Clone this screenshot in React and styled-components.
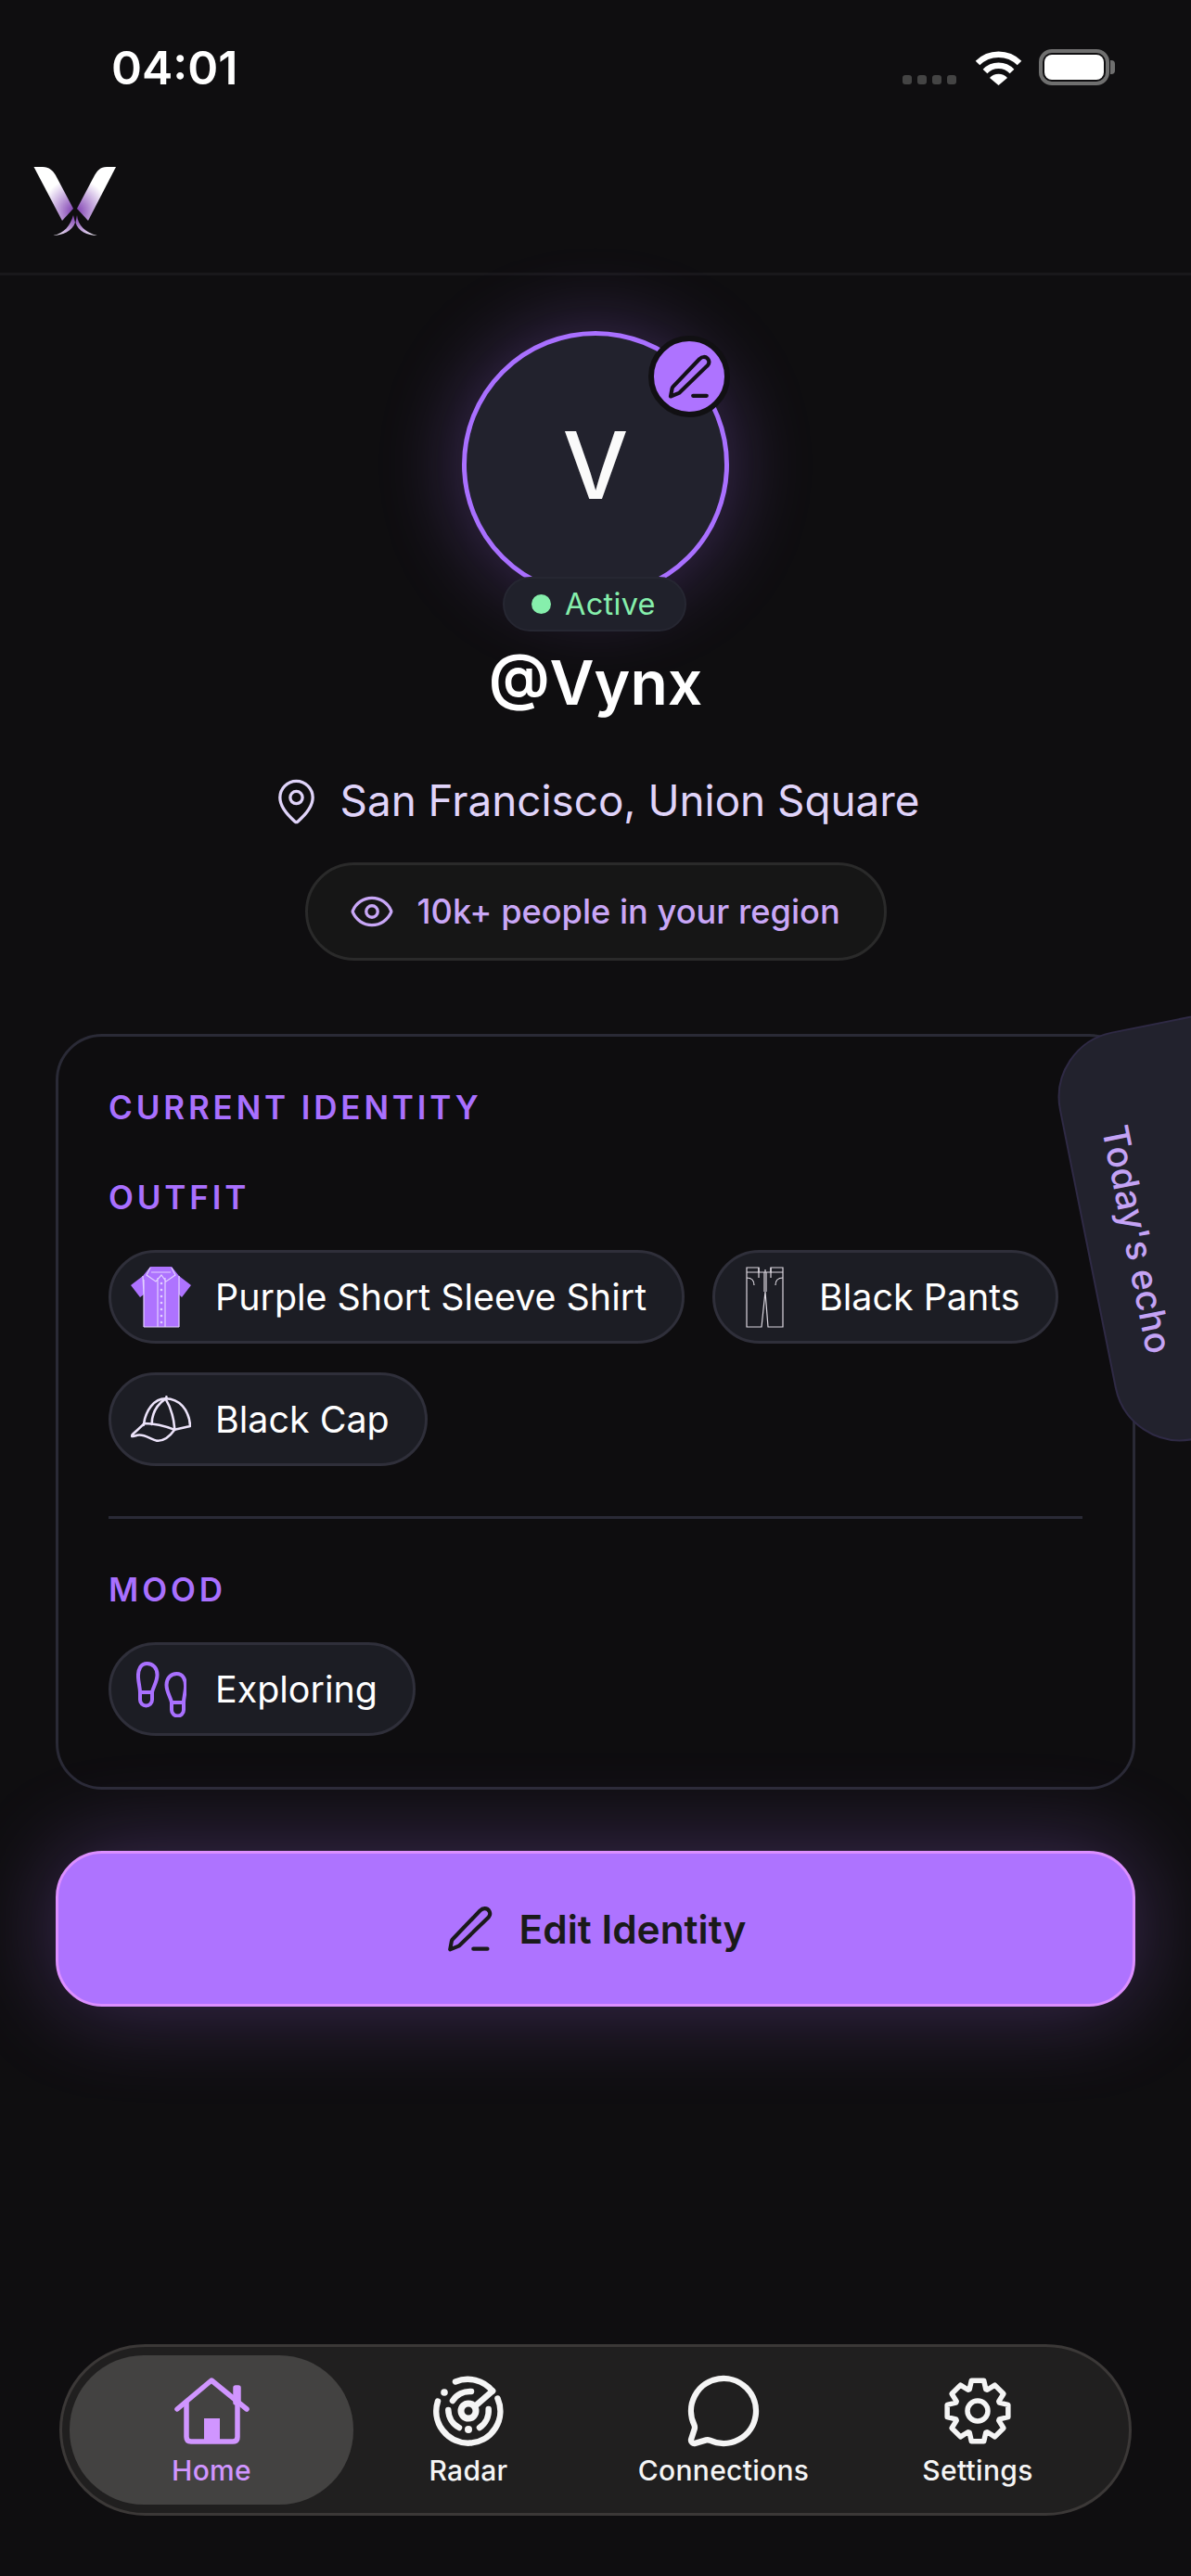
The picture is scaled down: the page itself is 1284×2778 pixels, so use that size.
import React from 'react';
import styled, { createGlobalStyle } from 'styled-components';
import { MapPin, Eye, MessageCircle } from 'lucide-react';

const GlobalStyle = createGlobalStyle`
  html, body {
    margin: 0;
    padding: 0;
    background: #0f0e10;
    overflow: hidden;
  }
  * { box-sizing: border-box; }
`;

const Page = styled.div`
  position: relative;
  width: 1284px;
  height: 2778px;
  overflow: hidden;
  background: #0f0e10;
  font-family: Inter, "Liberation Sans", sans-serif;
  color: #fff;
`;

const StatusBar = styled.div`
  height: 130px;
  display: flex;
  justify-content: space-between;
  align-items: flex-start;
  padding: 43px 82px 0 120px;
`;

const Time = styled.div`
  font-size: 50px;
  line-height: 60px;
  font-weight: 600;
`;

const StatusIcons = styled.div`
  display: flex;
  align-items: flex-end;
  margin-top: 10px;
`;

const Signal = styled.div`
  display: flex;
  gap: 6px;
  margin: 0 20px 1px 0;
`;

const SignalDot = styled.span`
  width: 10px;
  height: 10px;
  border-radius: 3px;
  background: #444;
`;

const Battery = styled.div`
  position: relative;
  width: 76px;
  height: 39px;
  margin-left: 18px;
  margin-right: 6px;
  padding: 2px;
  border: 4px solid #6f6f6f;
  border-radius: 14px;
  &::after {
    content: '';
    position: absolute;
    right: -10px;
    top: 8px;
    width: 5px;
    height: 15px;
    border-radius: 0 4px 4px 0;
    background: #6f6f6f;
  }
`;

const BatteryFill = styled.div`
  height: 100%;
  border-radius: 8px;
  background: #fff;
`;

const Header = styled.header`
  height: 167px;
  padding: 50px 0 0 36px;
  border-bottom: 3px solid #19181b;
`;

const Profile = styled.section`
  display: flex;
  flex-direction: column;
  align-items: center;
  padding-top: 60px;
`;

const AvatarWrap = styled.div`
  position: relative;
  width: 288px;
  height: 324px;
`;

const Avatar = styled.div`
  width: 288px;
  height: 288px;
  border-radius: 50%;
  border: 5px solid #a970ff;
  background: #22222d;
  box-shadow: 0 0 90px rgba(169, 112, 255, 0.32);
  display: flex;
  align-items: center;
  justify-content: center;
  font-size: 100px;
  font-weight: 500;
  color: #fafafa;
`;

const EditBadge = styled.div`
  position: absolute;
  top: 5px;
  right: -1px;
  width: 88px;
  height: 88px;
  border-radius: 50%;
  border: 6px solid #111013;
  background: #ae73ff;
  display: flex;
  align-items: center;
  justify-content: center;
`;

const StatusPill = styled.div`
  position: absolute;
  bottom: 0;
  left: 44px;
  width: 198px;
  height: 59px;
  border-radius: 30px;
  border: 2px solid #262732;
  background: #20212b;
  display: flex;
  align-items: center;
  gap: 15px;
  padding-left: 29px;
  font-size: 32.5px;
  font-weight: 400;
  letter-spacing: 0.3px;
  color: #86efac;
`;

const StatusDot = styled.span`
  width: 21px;
  height: 21px;
  border-radius: 50%;
  background: #86efac;
`;

const Name = styled.h1`
  margin: 15px 0 0;
  font-size: 66px;
  line-height: 80px;
  font-weight: 600;
`;

const Location = styled.div`
  margin-top: 60px;
  display: flex;
  align-items: center;
  gap: 21px;
  font-size: 45.8px;
  line-height: 56px;
  color: #e0d4fa;
`;

const RegionPill = styled.div`
  margin-top: 38px;
  width: 627px;
  height: 106px;
  display: flex;
  align-items: center;
  gap: 24px;
  padding-left: 44px;
  border-radius: 53px;
  border: 3px solid #2a2a2a;
  background: #161616;
  font-size: 36.2px;
  font-weight: 500;
  color: #c9a7f7;
`;

const Card = styled.section`
  margin: 79px 60px 0;
  padding: 55px 54px;
  border: 3px solid #2a2a36;
  border-radius: 50px;
  background: #0e0d0f;
`;

const SectionLabel = styled.h2`
  margin: ${(p) => (p.$first ? '0 0 55px' : '0 0 36px')};
  font-size: 35px;
  line-height: 42px;
  font-weight: 600;
  letter-spacing: 0.11em;
  color: #a970ff;
`;

const ChipRow = styled.div`
  display: flex;
  flex-wrap: wrap;
  gap: 31px 30px;
`;

const Chip = styled.div`
  height: 101px;
  display: flex;
  align-items: center;
  gap: 26px;
  padding: 0 38px 0 21px;
  border-radius: 51px;
  border: 3px solid #2f2f3a;
  background: #1c1d24;
  font-size: 39.4px;
  color: #fff;
`;

const ChipIcon = styled.span`
  width: 65px;
  display: flex;
  justify-content: center;
`;

const Divider = styled.hr`
  height: 3px;
  margin: 54px 0 55px;
  border: 0;
  background: #2a2a36;
`;

const EditButton = styled.button`
  display: flex;
  align-items: center;
  justify-content: center;
  gap: 28px;
  width: 1164px;
  height: 168px;
  margin: 66px 60px 0;
  border: 3px solid #dc8fff;
  border-radius: 50px;
  background: #ae73ff;
  box-shadow: 0 0 100px rgba(174, 115, 255, 0.3);
  font-family: inherit;
  font-size: 42.4px;
  font-weight: 600;
  color: #1a1a1a;
`;

const Nav = styled.nav`
  display: grid;
  grid-template-columns: 306px 248px 302px 246px;
  width: 1156px;
  height: 185px;
  margin: 364px 0 0 64px;
  padding: 9px 8px;
  border: 3px solid #3b3837;
  border-radius: 93px;
  background: #201f1f;
`;

const NavItem = styled.div`
  display: flex;
  flex-direction: column;
  align-items: center;
  gap: 8px;
  height: 161px;
  padding-top: 22px;
  border-radius: 80px;
  background: ${(p) => (p.$active ? '#434241' : 'transparent')};
  color: ${(p) => (p.$active ? '#d095ff' : '#f5f5f5')};
`;

const NavIcon = styled.span`
  height: 76px;
  display: flex;
  align-items: center;
  justify-content: center;
`;

const NavLabel = styled.span`
  font-size: 30px;
  line-height: 36px;
  font-weight: 500;
  letter-spacing: 0.3px;
`;

const EchoTab = styled.div`
  position: absolute;
  left: 1169px;
  top: 1093px;
  width: 300px;
  height: 449px;
  display: flex;
  align-items: center;
  padding-left: 31px;
  border: 2px solid #2f2a45;
  border-radius: 72px;
  background: #22222d;
  transform: rotate(-11.3deg);
`;

const EchoText = styled.span`
  writing-mode: vertical-rl;
  font-size: 39px;
  line-height: 44px;
  font-weight: 500;
  color: #c4a3f5;
`;

const Wifi = () => (
  <svg width="51" height="37" viewBox="0 0 51 37" fill="none" stroke="#fff" strokeWidth="6.5">
    <path d="M3 13A32 32 0 0 1 48 13" />
    <path d="M11 22A20 20 0 0 1 40 22" />
    <path d="M25.5 37L16 29A13 13 0 0 1 35 29Z" fill="#fff" stroke="none" />
  </svg>
);

const Logo = () => (
  <svg width="90" height="75" viewBox="0 0 90 75" style={{ display: 'block' }}>
    <defs>
      <radialGradient id="wing" gradientUnits="userSpaceOnUse" cx="45" cy="48" r="42">
        <stop offset="0" stopColor="#7a37ae" />
        <stop offset="0.5" stopColor="#c9aee0" />
        <stop offset="0.85" stopColor="#ffffff" />
      </radialGradient>
      <radialGradient id="leg" gradientUnits="userSpaceOnUse" cx="45" cy="52" r="28">
        <stop offset="0" stopColor="#7a37ae" />
        <stop offset="1" stopColor="#efe6f7" />
      </radialGradient>
    </defs>
    <path d="M0.5 0H10C17 0 21 4 24 9L43 45L31 58Z" fill="url(#wing)" />
    <path d="M89 0H79C72 0 69 4 66 9L47 45L59 58Z" fill="url(#wing)" />
    <path d="M43 52C40 63 33 72 21 74C31 74 42 69 45 60Z" fill="url(#leg)" />
    <path d="M47 52C48 63 56 71 69 74C58 74 48 69 45.5 60Z" fill="url(#leg)" />
  </svg>
);

const PenIcon = ({ size, stroke = '#141118', sw = 2 }) => (
  <svg width={size} height={size} viewBox="0 0 24 24" fill="none" stroke={stroke} strokeWidth={sw} strokeLinecap="round" strokeLinejoin="round">
    <path d="M19.6 1.9a2.6 2.6 0 0 1 2 4.3L7.2 20.2a2 2 0 0 1-.8.5l-4 1.6.8-4.2a2 2 0 0 1 .5-.9L17.4 2.9a3 3 0 0 1 2.2-1z" />
    <path d="M14 22h7" />
  </svg>
);

const ShirtIcon = () => (
  <svg width="65" height="66" viewBox="0 0 65 66" fill="none">
    <path d="M21 0H44L52 10L65 20L55 33L52 30V65H14V30L10 33L0 20L13 10Z" fill="#ae73ff" />
    <g stroke="#e3d2ff" strokeWidth="1.2">
      <path d="M21 1L17 9L27 16L33 9L38 16L48 9L44 1M22 6H43M14 14V65M52 14V65M29 12V65M37 12V65M13 10L14 30M52 10V30M14 65H52" />
    </g>
    <g fill="#e3d2ff">
      {[18, 25, 32, 39, 46, 53, 60].map((y) => (
        <circle key={y} cx="33" cy={y} r="1.3" />
      ))}
    </g>
  </svg>
);

const PantsIcon = () => (
  <svg width="42" height="66" viewBox="0 0 42 66" fill="none" stroke="#dcd8e0" strokeWidth="1.2">
    <path d="M1 1H14V6H27V1H40V65H24L21 27L17 65H1Z" />
    <path d="M1 6H14M27 6H40M1 12C7 12 9 16 9 20M40 12C34 12 32 16 32 20M20 6V27M22 6V27M14 1V12M27 1V12M21 3V6" />
  </svg>
);

const CapIcon = () => (
  <svg width="66" height="51" viewBox="0 0 66 51" fill="none" stroke="#ece3fa" strokeWidth="2.6" strokeLinecap="round" strokeLinejoin="round">
    <path d="M14 32C16 15 26 3 38 3C53 3 64 15 65 33L48 37" />
    <path d="M38 3C28 10 23 20 23 31M38 3C43 11 47 24 48 36M39 3V1" />
    <path d="M15 30C26 30 38 33 48 37C43 44 36 50 28 49C21 47 14 41 7 43C4 44 2 45 1 44C0 43 8 37 15 30Z" />
  </svg>
);

const SoleIcon = () => (
  <g>
    <path d="M11.5 2C5 2 1.5 8 2 17C2.3 23 4 28 4 33V41A6.5 6.5 0 0 0 17 41V33C18 27 22.5 22 22.5 14C22.5 7 18 2 11.5 2Z" />
    <path d="M4 33H17" />
  </g>
);

const StepsIcon = () => (
  <svg width="54" height="60" viewBox="0 0 54 60" fill="none" stroke="#a970ff" strokeWidth="4">
    <SoleIcon />
    <g transform="translate(55 11) scale(-1 1)">
      <SoleIcon />
    </g>
  </svg>
);

const HomeIcon = () => (
  <svg width="81" height="72" viewBox="0 0 81 72" fill="none" stroke="currentColor" strokeWidth="5.5" strokeLinecap="round" strokeLinejoin="round">
    <path d="M3 34L40 3L78 34" />
    <path d="M13 27V64Q13 69 18 69H63Q68 69 68 64V27" />
    <path d="M66 11H69V27H66Z" fill="currentColor" />
    <path d="M32 44H49V69H32Z" fill="currentColor" stroke="none" />
  </svg>
);

const RadarIcon = () => (
  <svg width="76" height="76" viewBox="-38 -38 76 76" fill="none" stroke="currentColor" strokeWidth="6.5" strokeLinecap="round">
    <path d="M-14 -31.5A34.5 34.5 0 0 1 26 -21.5" />
    <path d="M31.5 -13.5A34.5 34.5 0 1 1 -33 -10.5" />
    <path d="M-21.7 -1A22 22 0 0 0 -10 18" />
    <path d="M21.7 -2A22 22 0 0 1 12 18" />
    <path d="M-17 -11A22 22 0 0 1 3 -21" />
    <path d="M7 -5L26 -21.5" />
    <circle cx="0" cy="0" r="8" strokeWidth="7" />
    <circle cx="-26" cy="-20" r="3.8" fill="currentColor" stroke="none" />
    <circle cx="0" cy="20" r="4" fill="currentColor" stroke="none" />
  </svg>
);

// gear outline with 8 teeth, radii in svg units
const gearPath = () => {
  const pts = [];
  for (let i = 0; i < 8; i++) {
    const a = (i * 45 * Math.PI) / 180 - Math.PI / 2;
    [[25, -0.36], [33.5, -0.2], [33.5, 0.2], [25, 0.36]].forEach(([r, d]) => {
      pts.push(`${(r * Math.cos(a + d)).toFixed(2)} ${(r * Math.sin(a + d)).toFixed(2)}`);
    });
  }
  return `M${pts.join('L')}Z`;
};

const GearIcon = () => (
  <svg width="74" height="74" viewBox="-37 -37 74 74" fill="none" stroke="currentColor" strokeWidth="5.5" strokeLinejoin="round">
    <path d={gearPath()} />
    <circle cx="0" cy="0" r="11" />
  </svg>
);

const navItems = [
  { label: 'Home', icon: <HomeIcon />, active: true },
  { label: 'Radar', icon: <RadarIcon /> },
  { label: 'Connections', icon: <MessageCircle size={84} strokeWidth={1.8} /> },
  { label: 'Settings', icon: <GearIcon /> },
];

function App() {
  return (
    <Page>
      <GlobalStyle />
      <StatusBar>
        <Time>04:01</Time>
        <StatusIcons>
          <Signal>
            <SignalDot />
            <SignalDot />
            <SignalDot />
            <SignalDot />
          </Signal>
          <Wifi />
          <Battery>
            <BatteryFill />
          </Battery>
        </StatusIcons>
      </StatusBar>
      <Header>
        <Logo />
      </Header>

      <Profile>
        <AvatarWrap>
          <Avatar>V</Avatar>
          <EditBadge>
            <PenIcon size={50} />
          </EditBadge>
          <StatusPill>
            <StatusDot />
            Active
          </StatusPill>
        </AvatarWrap>
        <Name>@Vynx</Name>
        <Location>
          <MapPin size={53} strokeWidth={1.5} />
          San Francisco, Union Square
        </Location>
        <RegionPill>
          <Eye size={50} strokeWidth={1.6} />
          10k+ people in your region
        </RegionPill>
      </Profile>

      <Card>
        <SectionLabel $first>CURRENT IDENTITY</SectionLabel>
        <SectionLabel>OUTFIT</SectionLabel>
        <ChipRow>
          <Chip>
            <ChipIcon><ShirtIcon /></ChipIcon>
            Purple Short Sleeve Shirt
          </Chip>
          <Chip>
            <ChipIcon><PantsIcon /></ChipIcon>
            Black Pants
          </Chip>
          <Chip>
            <ChipIcon><CapIcon /></ChipIcon>
            Black Cap
          </Chip>
        </ChipRow>
        <Divider />
        <SectionLabel>MOOD</SectionLabel>
        <ChipRow>
          <Chip>
            <ChipIcon><StepsIcon /></ChipIcon>
            Exploring
          </Chip>
        </ChipRow>
      </Card>

      <EchoTab>
        <EchoText>Today's echo</EchoText>
      </EchoTab>

      <EditButton>
        <PenIcon size={52} stroke="#1a1a1a" sw={1.9} />
        Edit Identity
      </EditButton>

      <Nav>
        {navItems.map((item) => (
          <NavItem key={item.label} $active={item.active}>
            <NavIcon>{item.icon}</NavIcon>
            <NavLabel>{item.label}</NavLabel>
          </NavItem>
        ))}
      </Nav>
    </Page>
  );
}

export default App;
